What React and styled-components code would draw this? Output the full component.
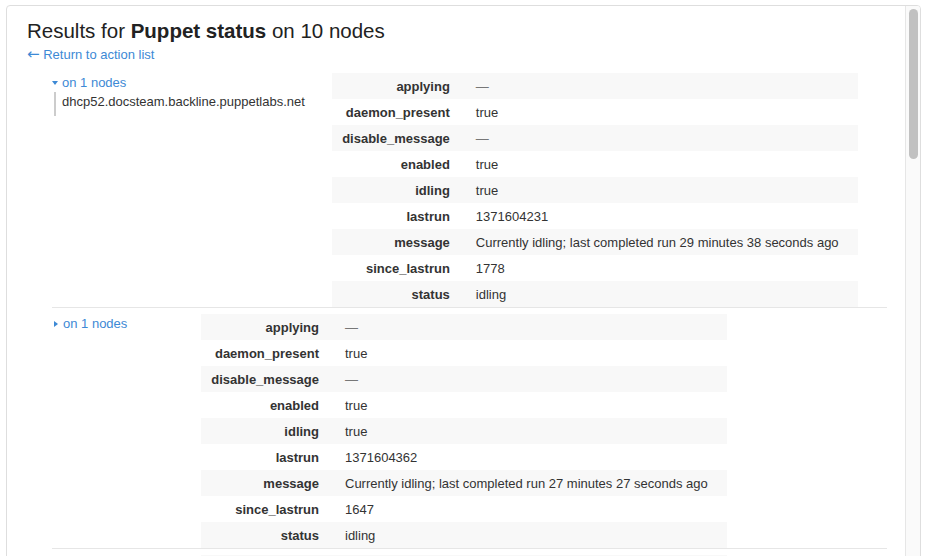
import React from "react";
import styled, { createGlobalStyle } from "styled-components";

const GlobalStyle = createGlobalStyle`
  html, body {
    margin: 0;
    padding: 0;
    background: #ffffff;
    overflow: hidden;
  }
  body {
    font-family: "Liberation Sans", Arial, sans-serif;
    color: #333333;
  }
`;

const results = [
  { host: "dhcp52.docsteam.backline.puppetlabs.net", open: true, lastrun: "1371604231", since: "1778", ago: "29 minutes 38 seconds" },
  { host: "agent01.docsteam.backline.puppetlabs.net", open: false, lastrun: "1371604362", since: "1647", ago: "27 minutes 27 seconds" },
  { host: "agent02.docsteam.backline.puppetlabs.net", open: false, lastrun: "1371604410", since: "1599", ago: "26 minutes 39 seconds" },
  { host: "agent03.docsteam.backline.puppetlabs.net", open: false, lastrun: "1371604502", since: "1507", ago: "25 minutes 7 seconds" },
];

const rowsFor = (r) => [
  ["applying", "—"],
  ["daemon_present", "true"],
  ["disable_message", "—"],
  ["enabled", "true"],
  ["idling", "true"],
  ["lastrun", r.lastrun],
  ["message", `Currently idling; last completed run ${r.ago} ago`],
  ["since_lastrun", r.since],
  ["status", "idling"],
];

const App = () => {
  return (
    <>
      <GlobalStyle />
      <Panel>
        <Content>
          <Title>
            Results for <strong>Puppet status</strong> on 10 nodes
          </Title>
          <BackLink href="#">
            <Arrow>←</Arrow> Return to action list
          </BackLink>
          <Groups>
            {results.map((r, i) => (
              <Group key={i}>
                <NodeCol>
                  <Toggle href="#">
                    <Caret open={r.open} />
                    on 1 nodes
                  </Toggle>
                  {r.open && <HostList>{r.host}</HostList>}
                </NodeCol>
                <StatusTable>
                  <tbody>
                    {rowsFor(r).map(([k, v]) => (
                      <tr key={k}>
                        <KeyCell>{k}</KeyCell>
                        <ValueCell muted={v === "—"}>{v}</ValueCell>
                      </tr>
                    ))}
                  </tbody>
                </StatusTable>
              </Group>
            ))}
          </Groups>
        </Content>
        <ScrollTrack>
          <ScrollThumb />
        </ScrollTrack>
      </Panel>
    </>
  );
};

export default App;

const Panel = styled.div`
  box-sizing: border-box;
  display: flex;
  margin: 5px 0 0 6px;
  width: 915px;
  height: 560px;
  border: 1px solid #dedede;
  border-radius: 4px 4px 0 0;
  overflow: hidden;
  background: #ffffff;
`;

const Content = styled.div`
  flex: 1;
  min-width: 0;
  padding: 13px 18px 40px 20px;
`;

const ScrollTrack = styled.div`
  flex: 0 0 15px;
  box-sizing: border-box;
  padding: 3px 2px 0 3px;
  background: #fafafa;
  border-left: 1px solid #e6e6e6;
`;

const ScrollThumb = styled.div`
  width: 9px;
  height: 150px;
  border-radius: 5px;
  background: #c1c1c1;
`;

const Title = styled.h1`
  margin: 0 0 3px;
  font-size: 20.5px;
  line-height: 24px;
  font-weight: normal;
  color: #222222;

  strong {
    font-weight: bold;
  }
`;

const BackLink = styled.a`
  display: block;
  height: 18px;
  font-size: 13px;
  line-height: 18px;
  color: #3d89d5;
  text-decoration: none;
`;

const Arrow = styled.span`
  font-family: "DejaVu Sans", sans-serif;
  font-size: 15px;
  line-height: 0;
`;

const Groups = styled.div`
  margin: 3px 0 0 25px;
`;

const Group = styled.div`
  display: flex;
  align-items: flex-start;
  padding-top: 6px;
  border-bottom: 1px solid #e6e6e6;
`;

const NodeCol = styled.div`
  min-width: 149px;
  box-sizing: border-box;
  padding: 1px 27px 0 0;
  font-size: 13px;
  line-height: 18px;
`;

const Toggle = styled.a`
  display: flex;
  align-items: center;
  color: #3d89d5;
  text-decoration: none;
`;

const Caret = styled.span`
  display: inline-block;
  width: 0;
  height: 0;
  margin: ${(p) => (p.open ? "0 4px 0 0" : "0 5px 0 2px")};
  ${(p) =>
    p.open
      ? `
    border-left: 3px solid transparent;
    border-right: 3px solid transparent;
    border-top: 4px solid #3d89d5;
  `
      : `
    border-top: 3.5px solid transparent;
    border-bottom: 3.5px solid transparent;
    border-left: 4px solid #3d89d5;
  `}
`;

const HostList = styled.div`
  margin-left: 2px;
  padding: 1px 0 5px 6px;
  border-left: 2px solid #cccccc;
  color: #333333;
  white-space: nowrap;
`;

const StatusTable = styled.table`
  width: 526px;
  border-collapse: collapse;
  font-size: 13px;

  tr {
    height: 26px;
  }
  tr:nth-child(odd) {
    background: #f8f8f8;
  }
`;

const KeyCell = styled.td`
  width: 130px;
  box-sizing: border-box;
  padding: 0 12px 0 0;
  text-align: right;
  font-weight: bold;
  color: #333333;
  vertical-align: middle;
`;

const ValueCell = styled.td`
  padding: 0 0 0 14px;
  color: ${(p) => (p.muted ? "#777777" : "#333333")};
  vertical-align: middle;
`;
